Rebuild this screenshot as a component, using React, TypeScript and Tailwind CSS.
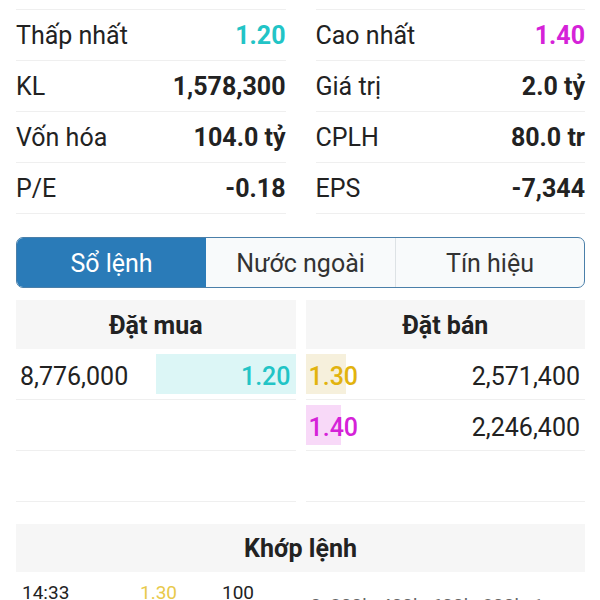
import React from 'react';

type Stat = { label: string; value: string; tone?: string };

const leftStats: Stat[] = [
  { label: 'Thấp nhất', value: '1.20', tone: 'text-[#22c4c6]' },
  { label: 'KL', value: '1,578,300' },
  { label: 'Vốn hóa', value: '104.0 tỷ' },
  { label: 'P/E', value: '-0.18' },
];

const rightStats: Stat[] = [
  { label: 'Cao nhất', value: '1.40', tone: 'text-[#d522d8]' },
  { label: 'Giá trị', value: '2.0 tỷ' },
  { label: 'CPLH', value: '80.0 tr' },
  { label: 'EPS', value: '-7,344' },
];

const StatColumn = ({ items }: { items: Stat[] }) => (
  <div className="border-t border-[#efefef]">
    {items.map((s) => (
      <div key={s.label} className="flex h-[51px] items-center justify-between border-b border-[#efefef] pt-[2px]">
        <span className="text-[25px] text-[#222]">{s.label}</span>
        <span className={`text-[25px] font-bold ${s.tone ?? 'text-[#222]'}`}>{s.value}</span>
      </div>
    ))}
  </div>
);

const tabs = ['Sổ lệnh', 'Nước ngoài', 'Tín hiệu'];

const axis = ['0', '200k', '400k', '600k', '800k', '1m'];

export default function App() {
  return (
    <div className="h-[600px] w-[600px] overflow-hidden bg-white pl-4 pr-[15px] pt-[9px] font-['Roboto',sans-serif]">
      <div className="grid grid-cols-2 gap-x-[30px]">
        <StatColumn items={leftStats} />
        <StatColumn items={rightStats} />
      </div>

      <div className="mt-[23px] grid h-[51px] grid-cols-3 overflow-hidden rounded-[7px] border border-[#4a7fa9] bg-[#f8fafb]">
        {tabs.map((t, i) => (
          <div
            key={t}
            className={`flex items-center justify-center pt-[2px] text-[25px] ${
              i === 0 ? 'bg-[#2a7bb8] text-white' : 'text-[#333]'
            } ${i === 2 ? 'border-l border-[#dde2e5]' : ''}`}
          >
            {t}
          </div>
        ))}
      </div>

      <div className="mt-3 grid grid-cols-2 gap-x-[10px]">
        <div>
          <div className="flex h-[49px] items-center justify-center bg-[#f6f6f6] pt-[2px] text-[25px] font-bold text-[#222]">
            Đặt mua
          </div>
          <div className="flex h-[51px] items-center justify-between border-b border-[#efefef] pl-1">
            <span className="pt-[5px] text-[25px] text-[#222]">8,776,000</span>
            <div className="flex h-[40px] w-[140px] items-center justify-end bg-[#dcf6f6] pr-[5px] pt-[5px]">
              <span className="text-[25px] font-medium text-[#22c4c6]">1.20</span>
            </div>
          </div>
          <div className="h-[51px] border-b border-[#efefef]" />
          <div className="h-[51px] border-b border-[#efefef]" />
        </div>
        <div>
          <div className="flex h-[49px] items-center justify-center bg-[#f6f6f6] pt-[2px] text-[25px] font-bold text-[#222]">
            Đặt bán
          </div>
          <div className="relative flex h-[51px] items-center justify-between border-b border-[#efefef] pr-[5px] pt-[5px]">
            <div className="absolute left-0 top-[5px] h-[40px] w-[40px] bg-[#f6f0dc]" />
            <span className="relative pl-[3px] text-[25px] font-medium text-[#e2b30e]">1.30</span>
            <span className="text-[25px] text-[#222]">2,571,400</span>
          </div>
          <div className="relative flex h-[51px] items-center justify-between border-b border-[#efefef] pr-[5px] pt-[5px]">
            <div className="absolute left-0 top-[5px] h-[40px] w-[35px] bg-[#f8d9f8]" />
            <span className="relative pl-[3px] text-[25px] font-medium text-[#d522d8]">1.40</span>
            <span className="text-[25px] text-[#222]">2,246,400</span>
          </div>
          <div className="h-[51px] border-b border-[#efefef]" />
        </div>
      </div>

      <div className="mt-[22px] flex h-[48px] items-center justify-center bg-[#f6f6f6] pt-[2px] text-[25px] font-bold text-[#222]">
        Khớp lệnh
      </div>

      <div className="grid grid-cols-2 gap-x-[10px]">
        <div className="flex pl-[6px] pt-[7px] text-[19px] text-[#222]">
          <span className="w-[118px]">14:33</span>
          <span className="w-[82px] text-[#e8c94a]">1.30</span>
          <span>100</span>
        </div>
        <div className="flex w-[255px] justify-between pl-[5px] pt-[20px] text-[19px] text-[#666]">
          {axis.map((a) => (
            <span key={a}>{a}</span>
          ))}
        </div>
      </div>
    </div>
  );
}
